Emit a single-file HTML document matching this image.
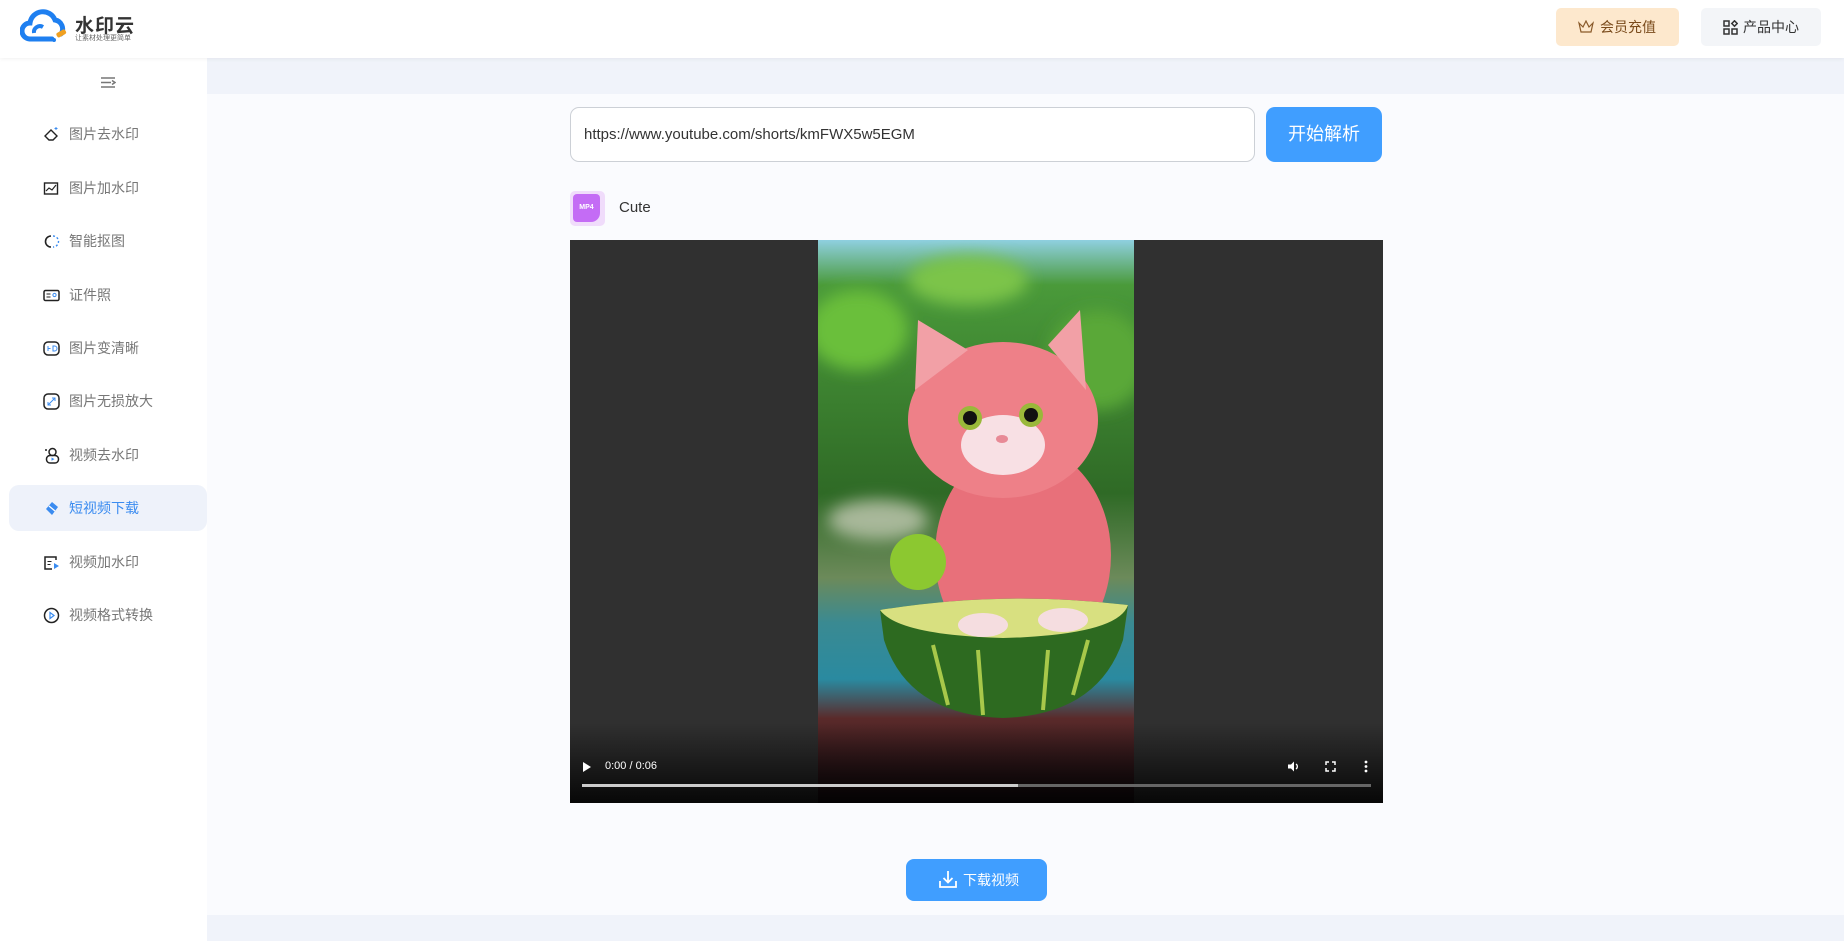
<!DOCTYPE html>
<html><head><meta charset="utf-8"><style>
*{margin:0;padding:0;box-sizing:border-box}
body{width:1844px;height:941px;overflow:hidden;font-family:"Liberation Sans","Noto Sans CJK SC",sans-serif;background:#f0f3fa;position:relative}
.hdr{position:absolute;left:0;top:0;width:1844px;height:58px;background:#fff;box-shadow:0 1px 4px rgba(0,0,0,.06);z-index:2}
.side{position:absolute;left:0;top:58px;width:207px;height:883px;background:#fff}
.item{position:absolute;left:9px;width:198px;height:46px;border-radius:10px;font-size:14px;color:#777;line-height:46px;padding-left:60px}
.item.act{background:#eef2fa;color:#3b8cf0}
.ico{position:absolute;left:34px;top:15px;width:17px;height:17px}
.main{position:absolute;left:207px;top:94px;width:1637px;height:821px;background:#fafbfe}
.band{position:absolute;left:207px;top:58px;width:1637px;height:36px;background:#f0f3fa}
</style></head><body>
<div class="hdr">
 <svg style="position:absolute;left:20px;top:9px" width="52" height="36" viewBox="0 0 52 36"><path d="M10 30a8 8 0 0 1 0-16a13 13 0 0 1 25-3a9 9 0 0 1 6 14" fill="none" stroke="#1e7ff0" stroke-width="5" stroke-linecap="round"/><path d="M14 24a6 6 0 0 1 9-6" fill="none" stroke="#1e7ff0" stroke-width="4"/><path d="M10 30h22" stroke="#1e7ff0" stroke-width="5" stroke-linecap="round"/><rect x="36" y="22" width="10" height="5" rx="2" fill="#f0a020" transform="rotate(-30 41 24)"/><circle cx="34" cy="31" r="2" fill="#1e7ff0"/></svg>
 <div style="position:absolute;left:75px;top:11px;font-size:19px;font-weight:bold;color:#333;letter-spacing:1px">水印云</div>
 <div style="position:absolute;left:75px;top:33px;font-size:7px;color:#666">让素材处理更简单</div>
 <div style="position:absolute;left:1556px;top:8px;width:123px;height:38px;background:#fde8cd;border-radius:5px;font-size:14px;color:#7a4b1c;line-height:38px;padding-left:44px">会员充值
  <svg style="position:absolute;left:22px;top:12px" width="16" height="14" viewBox="0 0 16 14"><path d="M1 3l4 4 3-6 3 6 4-4-2 9H3z" fill="none" stroke="#8a5a2a" stroke-width="1.2"/></svg></div>
 <div style="position:absolute;left:1701px;top:8px;width:120px;height:38px;background:#f3f5f8;border-radius:5px;font-size:14px;color:#333;line-height:38px;padding-left:42px">产品中心
  <svg style="position:absolute;left:22px;top:12px" width="15" height="15" viewBox="0 0 15 15"><g fill="none" stroke="#333" stroke-width="1.5"><rect x="1" y="1" width="5" height="5"/><rect x="1" y="9" width="5" height="5"/><rect x="9" y="9" width="5" height="5"/><path d="M11.5 0.8l2.7 2.7-2.7 2.7-2.7-2.7z"/></g></svg></div>
</div>
<div class="side">
 <svg style="position:absolute;left:100px;top:18px" width="16" height="13" viewBox="0 0 16 13"><path d="M1 2h14M1 6.5h10M1 11h14M12 4.5l3 2-3 2" fill="none" stroke="#777" stroke-width="1.5"/></svg>
 <div class="item" style="top:53px"><svg class="ico" viewBox="0 0 17 17"><path d="M2 10l6-6 6 6-4 4H6z" fill="none" stroke="#222" stroke-width="1.4"/><path d="M13 1v3M11.5 2.5h3" stroke="#3b8cf0"/></svg>图片去水印</div>
 <div class="item" style="top:107px"><svg class="ico" viewBox="0 0 17 17"><rect x="1.5" y="3" width="13" height="11" fill="none" stroke="#222" stroke-width="1.4"/><path d="M3 11l3-3 3 2 4-5" fill="none" stroke="#222" stroke-width="1.2"/></svg>图片加水印</div>
 <div class="item" style="top:160px"><svg class="ico" viewBox="0 0 17 17"><path d="M8 3A5.5 5.5 0 1 0 8 14" fill="none" stroke="#222" stroke-width="1.6"/><path d="M10 3a5.5 5.5 0 0 1 0 11" fill="none" stroke="#3b8cf0" stroke-width="1.4" stroke-dasharray="2 2"/></svg>智能抠图</div>
 <div class="item" style="top:214px"><svg class="ico" viewBox="0 0 17 17"><rect x="1" y="3.5" width="15" height="10" rx="1.5" fill="none" stroke="#222" stroke-width="1.5"/><path d="M3.5 7h4M3.5 10h4" stroke="#222"/><circle cx="11.5" cy="8" r="1.6" fill="none" stroke="#3b8cf0"/></svg>证件照</div>
 <div class="item" style="top:267px"><svg class="ico" viewBox="0 0 17 17"><rect x="1" y="2" width="15" height="13" rx="4" fill="none" stroke="#222" stroke-width="1.5"/><path d="M5 6v5M5 8.5h2.5M10 6v5h1.5a2 2 0 0 0 0-5z" fill="none" stroke="#3b8cf0"/></svg>图片变清晰</div>
 <div class="item" style="top:320px"><svg class="ico" viewBox="0 0 17 17"><rect x="1" y="1" width="15" height="15" rx="4" fill="none" stroke="#222" stroke-width="1.5"/><path d="M5 12l7-7M9 5h3v3M5 9v3h3" fill="none" stroke="#3b8cf0"/></svg>图片无损放大</div>
 <div class="item" style="top:374px"><svg class="ico" viewBox="0 0 17 17"><circle cx="9.5" cy="5" r="3.5" fill="none" stroke="#222" stroke-width="1.5"/><rect x="3.5" y="8.5" width="12" height="7.5" rx="3.5" fill="none" stroke="#222" stroke-width="1.5"/><path d="M8.5 10.5l3 1.6-3 1.6z" fill="#3b8cf0"/><circle cx="3" cy="3" r="1" fill="#222"/></svg>视频去水印</div>
 <div class="item act" style="top:427px"><svg class="ico" viewBox="0 0 17 17"><path d="M3 9l6-7 6 5-6 8z" fill="#3b8cf0"/><path d="M6 6l6 5" stroke="#fff" stroke-width="1.3"/></svg>短视频下载</div>
 <div class="item" style="top:481px"><svg class="ico" viewBox="0 0 17 17"><path d="M13 6V3H2v12h7" fill="none" stroke="#222" stroke-width="1.5"/><path d="M4.5 7.5h4M4.5 10.5h3" stroke="#222"/><path d="M11 9l5 3-5 3z" fill="#3b8cf0"/></svg>视频加水印</div>
 <div class="item" style="top:534px"><svg class="ico" viewBox="0 0 17 17"><circle cx="8.5" cy="8.5" r="7" fill="none" stroke="#222" stroke-width="1.5"/><path d="M7 5.5l4 3-4 3z" fill="none" stroke="#3b8cf0" stroke-width="1.2"/></svg>视频格式转换</div>
</div>
<div class="band"></div>
<div class="main"></div>
<div style="position:absolute;left:570px;top:107px;width:685px;height:55px;background:#fff;border:1px solid #ccd0d6;border-radius:9px;font-size:15px;color:#333;line-height:53px;padding-left:13px">https://www.youtube.com/shorts/kmFWX5w5EGM</div>
<div style="position:absolute;left:1266px;top:107px;width:116px;height:55px;background:#409eff;border-radius:9px;font-size:18px;color:#fff;line-height:55px;text-align:center">开始解析</div>
<div style="position:absolute;left:570px;top:191px;width:35px;height:35px;background:#f0dcfb;border-radius:5px"><div style="position:absolute;left:3px;top:3px;width:27px;height:28px;background:#c46cf5;border-radius:4px 4px 9px 4px;color:#fff;font-size:7px;font-weight:bold;line-height:28px;text-align:center">MP4</div></div>
<div style="position:absolute;left:619px;top:199px;font-size:15px;color:#333">Cute</div>
<div style="position:absolute;left:570px;top:240px;width:813px;height:563px;background:#303030;overflow:hidden">
 <svg style="position:absolute;left:248px;top:0" width="316" height="563" viewBox="0 0 316 563">
  <defs><linearGradient id="bg" x1="0" y1="0" x2="0" y2="1"><stop offset="0" stop-color="#8fd0e0"/><stop offset=".08" stop-color="#4a9a3a"/><stop offset=".45" stop-color="#2f6a26"/><stop offset=".6" stop-color="#6c8a5a"/><stop offset=".68" stop-color="#3a8a92"/><stop offset=".78" stop-color="#2a8aa0"/><stop offset=".85" stop-color="#5a2a2a"/><stop offset="1" stop-color="#1a0e14"/></linearGradient>
  <filter id="bl"><feGaussianBlur stdDeviation="8"/></filter></defs>
  <rect width="316" height="563" fill="url(#bg)"/>
  <g filter="url(#bl)"><ellipse cx="40" cy="90" rx="50" ry="40" fill="#6abf3a"/><ellipse cx="280" cy="120" rx="50" ry="50" fill="#5aa838"/><ellipse cx="150" cy="40" rx="60" ry="25" fill="#7cc44a"/><ellipse cx="60" cy="280" rx="50" ry="20" fill="#a8b89a"/></g>
  <ellipse cx="205" cy="315" rx="88" ry="110" fill="#e8707a"/>
  <ellipse cx="185" cy="180" rx="95" ry="78" fill="#ee8088"/>
  <path d="M97 150L100 80 150 110z" fill="#f2a0a6"/><path d="M230 105L262 70 268 150z" fill="#f2a0a6"/>
  <ellipse cx="185" cy="205" rx="42" ry="30" fill="#f8e0e4"/>
  <circle cx="152" cy="178" r="12" fill="#9ab83a"/><circle cx="152" cy="178" r="7" fill="#111"/>
  <circle cx="213" cy="175" r="12" fill="#9ab83a"/><circle cx="213" cy="175" r="7" fill="#111"/>
  <ellipse cx="184" cy="199" rx="6" ry="4" fill="#e88a96"/>
  <circle cx="100" cy="322" r="28" fill="#8cc830"/>
  <path d="M62 370Q185 350 310 365L305 400Q280 475 185 478Q90 475 66 400z" fill="#2d6a20"/>
  <path d="M62 370Q185 350 310 365Q300 395 185 398Q80 395 62 370z" fill="#d8e080"/>
  <ellipse cx="165" cy="385" rx="25" ry="12" fill="#f5dde0"/><ellipse cx="245" cy="380" rx="25" ry="12" fill="#f5dde0"/>
  <path d="M115 405l15 60M160 410l5 65M230 410l-5 60M270 400l-15 55" stroke="#a8c84a" stroke-width="4"/>
 </svg>
 <div style="position:absolute;left:0;bottom:0;width:813px;height:80px;background:linear-gradient(transparent,rgba(0,0,0,.85))"></div>
 <svg style="position:absolute;left:13px;top:522px" width="8" height="10"><path d="M0 0l8 5-8 5z" fill="#fff"/></svg>
 <div style="position:absolute;left:35px;top:520px;font-size:11px;color:#fff">0:00 / 0:06</div>
 <svg style="position:absolute;left:717px;top:520px" width="13" height="13" viewBox="0 0 13 13"><path d="M1 4.5h3l3-3v10l-3-3H1z" fill="#fff"/><path d="M9 4a3 3 0 0 1 0 5" stroke="#fff" fill="none" stroke-width="1.3"/></svg>
 <svg style="position:absolute;left:755px;top:521px" width="11" height="11" viewBox="0 0 11 11"><path d="M1 4V1h3M7 1h3v3M10 7v3H7M4 10H1V7" stroke="#fff" stroke-width="1.5" fill="none"/></svg>
 <svg style="position:absolute;left:794px;top:520px" width="4" height="13"><circle cx="2" cy="2" r="1.4" fill="#fff"/><circle cx="2" cy="6.5" r="1.4" fill="#fff"/><circle cx="2" cy="11" r="1.4" fill="#fff"/></svg>
 <div style="position:absolute;left:12px;top:544px;width:789px;height:3px;background:#666"></div>
 <div style="position:absolute;left:12px;top:544px;width:436px;height:3px;background:#ccc"></div>
</div>
<div style="position:absolute;left:906px;top:859px;width:141px;height:42px;background:#409eff;border-radius:8px;font-size:14px;color:#fff;line-height:42px;padding-left:57px">下载视频
 <svg style="position:absolute;left:32px;top:11px" width="20" height="19" viewBox="0 0 20 19"><path d="M10 1v11M5.5 8l4.5 4.5L14.5 8M2 11v6h16v-6" fill="none" stroke="#fff" stroke-width="1.8"/></svg></div>
</body></html>
